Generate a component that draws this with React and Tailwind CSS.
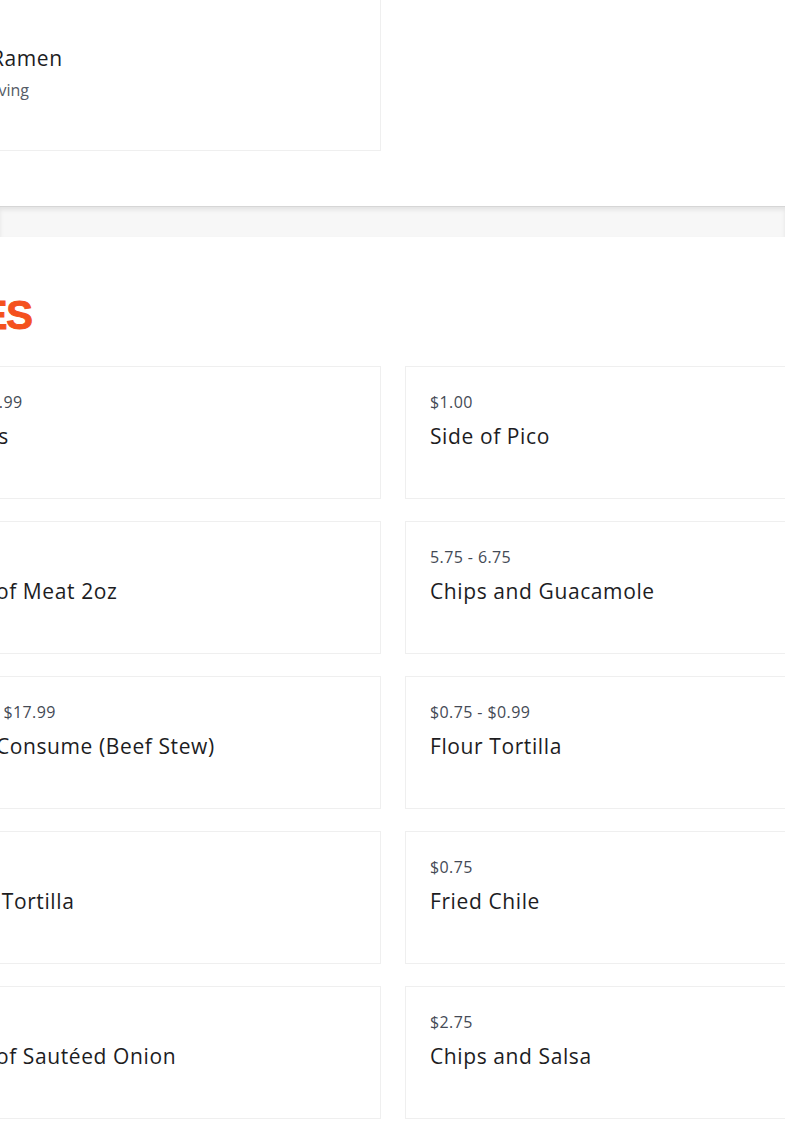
import React from "react";

const sides = [
  { price: "$2 - $3.99", name: "Beans" },
  { price: "$1.00", name: "Side of Pico" },
  { price: "$2.50", name: "Side of Meat 2oz" },
  { price: "5.75 - 6.75", name: "Chips and Guacamole" },
  { price: "$9.99 - $17.99", name: "Side Consume (Beef Stew)" },
  { price: "$0.75 - $0.99", name: "Flour Tortilla" },
  { price: "$0.75", name: "Corn Tortilla" },
  { price: "$0.75", name: "Fried Chile" },
  { price: "$1.00", name: "Side of Sautéed Onion" },
  { price: "$2.75", name: "Chips and Salsa" },
];

const ItemCard = ({ price, name, desc, className = "" }) => (
  <div className={`bg-white border border-[#efefef] px-6 pt-[25px] pb-[48px] ${className}`}>
    <p className="text-[16px] leading-5 tracking-[0.4px] text-[#444a55] whitespace-nowrap">{price}</p>
    <h3 className="mt-[10px] text-[21px] leading-7 tracking-[0.6px] text-[#1d1d1f] whitespace-nowrap">{name}</h3>
    {desc && <p className="mt-1.5 text-[16px] leading-6 text-[#555b66] whitespace-nowrap">{desc}</p>}
  </div>
);

export default function App() {
  return (
    <div className="w-full min-h-screen overflow-hidden bg-white font-['Open_Sans',sans-serif]">
      {/* previous section */}
      <section className="bg-white pb-[55px]">
        <div className="ml-[-79px] w-[944px] grid grid-cols-2 gap-6">
          <ItemCard price="$1.50" name="Top Ramen" desc="Per serving" className="mt-[-12px] pb-[24px]" />
          <div />
        </div>
      </section>

      {/* divider band */}
      <div className="h-[31px] bg-[#f7f7f7] border-t border-[#d6d6d6] shadow-[inset_0_3px_4px_rgba(0,0,0,0.08)]" />

      {/* sides */}
      <section className="bg-white pt-[58px] pb-10">
        <div className="ml-[-79px] w-[944px]">
          <h2 className="ml-[-4px] font-['Liberation_Sans',sans-serif] font-black text-[40px] leading-[40px] uppercase text-[#f4511e] tracking-tight [-webkit-text-stroke:1px_#f4511e]">
            Sides
          </h2>
          <div className="mt-[31px] grid grid-cols-2 gap-x-6 gap-y-[22px]">
            {sides.map((s) => (
              <ItemCard key={s.name} price={s.price} name={s.name} />
            ))}
          </div>
        </div>
      </section>
    </div>
  );
}
